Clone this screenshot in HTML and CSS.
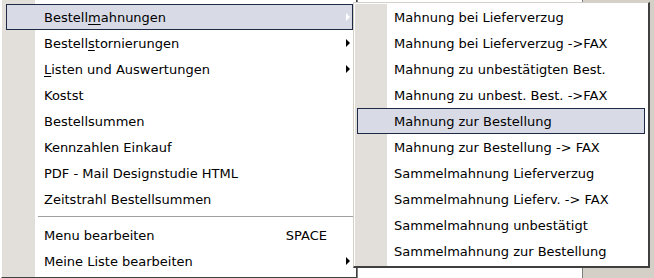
FILE: index.html
```html
<!DOCTYPE html>
<html lang="de">

<head>
  <meta charset="UTF-8">
  <meta name="viewport" content="width=device-width, initial-scale=1.0">
  <title>Bestellmahnungen</title>
  <link rel="stylesheet" href="styles.css">
</head>

<body>
  <div class="desktop">
    <div class="side_panel"></div>

    <ul class="menu main_menu">
      <li class="active"><span>Bestell<u>m</u>ahnungen</span><i class="arrow"></i></li>
      <li><span>Bestell<u>s</u>tornierungen</span><i class="arrow"></i></li>
      <li><span><u>L</u>isten und Auswertungen</span><i class="arrow"></i></li>
      <li><span>Kostst</span></li>
      <li><span>Bestellsummen</span></li>
      <li><span>Kennzahlen Einkauf</span></li>
      <li><span>PDF - Mail Designstudie HTML</span></li>
      <li><span>Zeitstrahl Bestellsummen</span></li>
      <li class="sep"></li>
      <li><span>Menu bearbeiten</span><span class="shortcut">SPACE</span></li>
      <li><span>Meine Liste bearbeiten</span><i class="arrow"></i></li>
    </ul>

    <ul class="menu sub_menu">
      <li><span>Mahnung bei Lieferverzug</span></li>
      <li><span>Mahnung bei Lieferverzug -&gt;FAX</span></li>
      <li><span>Mahnung zu unbestätigten Best.</span></li>
      <li><span>Mahnung zu unbest. Best. -&gt;FAX</span></li>
      <li class="active"><span>Mahnung zur Bestellung</span></li>
      <li><span>Mahnung zur Bestellung -&gt; FAX</span></li>
      <li><span>Sammelmahnung Lieferverzug</span></li>
      <li><span>Sammelmahnung Lieferv. -&gt; FAX</span></li>
      <li><span>Sammelmahnung unbestätigt</span></li>
      <li><span>Sammelmahnung zur Bestellung</span></li>
    </ul>
  </div>
</body>

</html>
```

FILE: styles.css
```css
* {
  box-sizing: border-box;
}

body {
  margin: 0;
  background: #fff;
  font-family: 'DejaVu Sans', Verdana, sans-serif;
  font-size: 13px;
  color: #000;
}

.desktop {
  position: relative;
  width: 654px;
  height: 278px;
  overflow: hidden;
  background: #fff;
}

.side_panel {
  position: absolute;
  top: 0;
  right: 0;
  width: 72px;
  height: 100%;
  background: #d4d0c8;
  border-left: 1px solid #808080;
}

ul.menu {
  list-style: none;
  margin: 0;
  position: absolute;
  background: linear-gradient(to right, #e2dfda 0 33px, #fff 33px);
}

.main_menu {
  left: 0;
  top: -2px;
  width: 357px;
  padding: 6px 3px 3px 4px;
  border-left: 2px solid #fff;
  border-bottom: 2px solid #404040;
  border-right: 1px solid #404040;
  box-shadow: 1px 1px 0 #808080;
}

.sub_menu {
  left: 353px;
  top: 2px;
  width: 297px;
  padding: 1px 3px 2px 3px;
  background: linear-gradient(to right, #e2dfda 0 32px, #fff 32px);
  border: 1px solid #d4d0c8;
  border-right: 2px solid #404040;
  border-bottom: 2px solid #404040;
  box-shadow: inset 1px 1px 0 #fff;
}

.menu li {
  height: 26px;
  display: flex;
  align-items: center;
  padding: 0 0 0 36px;
  border: 1px solid transparent;
  white-space: nowrap;
}

.main_menu li {
  padding-left: 37px;
}

.menu li.active {
  background: #d8dbe6;
  border-color: #1e2946;
}

.menu li.sep {
  height: 10px;
  padding: 0;
  border: 0;
  margin-left: 32px;
  margin-right: -3px;
  background: linear-gradient(to bottom, transparent 4px, #a0a0a0 4px, #a0a0a0 5px, transparent 5px);
}

.menu u {
  text-decoration: underline;
  text-underline-offset: 2px;
}

.shortcut {
  margin-left: auto;
  margin-right: 25px;
}

.arrow {
  margin-left: auto;
  margin-right: 2px;
  width: 0;
  height: 0;
  border-top: 4px solid transparent;
  border-bottom: 4px solid transparent;
  border-left: 4px solid #000;
}

li.active .arrow {
  border-left-color: #fff;
}
```
